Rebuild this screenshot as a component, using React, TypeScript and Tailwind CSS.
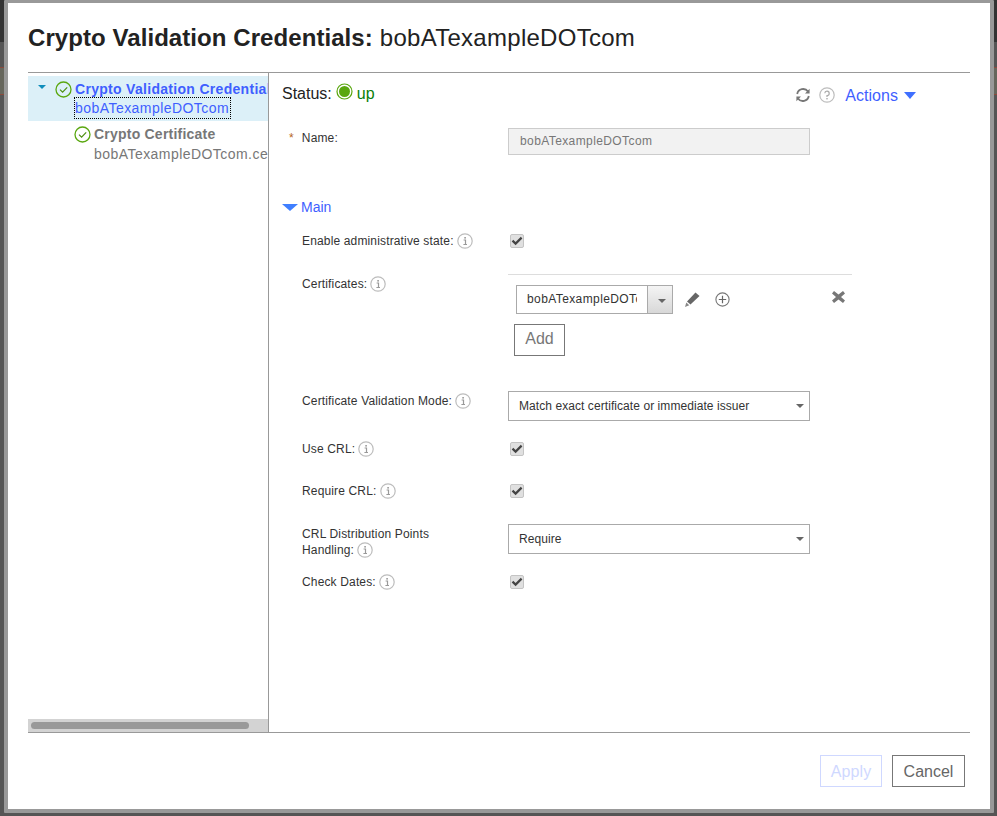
const sans = 'font-["Liberation_Sans",Arial,sans-serif]';

function CheckCircle() {
  return (
    <svg width="17" height="17" viewBox="0 0 17 17" fill="none" className="shrink-0">
      <circle cx="8.5" cy="8.5" r="7.5" stroke="#5aa70f" strokeWidth="1.3" />
      <path d="M5 8.6 L7.6 11.2 L12.2 6.4" stroke="#4d8f10" strokeWidth="1.2" />
    </svg>
  );
}

function Info() {
  return (
    <svg width="16" height="16" viewBox="0 0 16 16" fill="none" className="shrink-0">
      <circle cx="8" cy="8" r="7.2" stroke="#bdbdbd" strokeWidth="1.2" />
      <path d="M6.6 7 H8.5 V11.3 M6.4 11.5 H10" stroke="#999" strokeWidth="1.2" />
      <rect x="7.3" y="4" width="1.6" height="1.6" fill="#999" />
    </svg>
  );
}

function Check() {
  return (
    <div className="w-[14px] h-[14px] rounded-[2px] border border-[#c4c4c4] bg-[#e0e0e0] flex items-center justify-center">
      <svg width="12" height="10" viewBox="0 0 12 10" fill="none">
        <path d="M1.5 4.6 L4.6 7.6 L10.6 1.6" stroke="#444" strokeWidth="2.2" />
      </svg>
    </div>
  );
}

function Caret() {
  return <div className="w-0 h-0 border-x-[4px] border-x-transparent border-t-[4px] border-t-[#666]" />;
}

function Select({ value }: { value: string }) {
  return (
    <div className="w-[302px] h-[30px] border border-[#aaa] flex items-center justify-between pl-[10px] pr-[5px] text-[12px] tracking-[0.07px] text-[#333]">
      <span>{value}</span>
      <Caret />
    </div>
  );
}

function Label({ text }: { text: string }) {
  return (
    <span className="flex items-center gap-[3px] whitespace-nowrap">
      {text} <Info />
    </span>
  );
}

function Row({ label, height, children }: { label: React.ReactNode; height: string; children?: React.ReactNode }) {
  return (
    <div className={`flex ${height}`}>
      <div className="w-[206px] pl-[33px] text-[12px] leading-[16px] tracking-[0.15px] text-[#333]">{label}</div>
      <div>{children}</div>
    </div>
  );
}

export default function App() {
  return (
    <div className={`relative w-[997px] h-[816px] overflow-hidden bg-[#555] ${sans}`}>
      <div className="h-[42px] bg-[#333]" />
      <div className="mt-[25px] h-[28px] border-y border-[#8a4a3c] bg-[#66665c]" />

      <div className="absolute left-[4px] top-0 w-[990px] h-[813px] border-x-4 border-b-4 border-t-[3px] border-[#999] bg-white rounded-[1px]">
        <div className="h-[69px] pl-[20px] pt-[20px] text-[24px] leading-[30px] tracking-[0.28px] text-[#222]">
          <span className="font-bold tracking-[0.07px]">Crypto Validation Credentials:</span> bobATexampleDOTcom
        </div>

        <div className="ml-[20px] w-[942px] h-[661px] border-y border-[#999] flex">
          <div className="w-[240px] flex flex-col">
            <div className="flex-1 overflow-hidden pt-[3px]">
              <div className="h-[45px] bg-[#dcf0f8] flex whitespace-nowrap">
                <div className="ml-[10px] mt-[9px] w-0 h-0 border-x-[4px] border-x-transparent border-t-[4px] border-t-[#0f8dbb]" />
                <div className="ml-[9px] mt-[5px]"><CheckCircle /></div>
                <div className="ml-[3px] mt-[5px]">
                  <div className="text-[14px] leading-[17px] font-bold tracking-[0.3px] text-[#3f5fff]">Crypto Validation Credentials</div>
                  <div className="text-[14px] leading-[20px] tracking-[0.45px] text-[#3f5fff] outline-1 outline-dotted outline-black w-[155px]">bobATexampleDOTcom</div>
                </div>
              </div>
              <div className="flex whitespace-nowrap mt-[4px] ml-[46px]">
                <div className="mt-[1px]"><CheckCircle /></div>
                <div className="ml-[3px] mt-[1px]">
                  <div className="text-[14px] leading-[17px] font-bold tracking-[0.22px] text-[#777]">Crypto Certificate</div>
                  <div className="mt-[2px] text-[14px] leading-[18px] tracking-[0.45px] text-[#777]">bobATexampleDOTcom.cert</div>
                </div>
              </div>
            </div>
            <div className="h-[13px] bg-[#d3d3d3] px-[3px] pt-[3px]">
              <div className="w-[218px] h-[7px] rounded-full bg-[#999]" />
            </div>
          </div>

          <div className="flex-1 border-l border-[#999]">
            <div className="flex items-center h-[40px] pt-[2px] pl-[13px] text-[16px] text-[#222]">
              <span>Status:</span>
              <svg width="17" height="17" viewBox="0 0 17 17" className="ml-[4px] -mt-[5px]">
                <circle cx="8.5" cy="8.5" r="7.5" fill="none" stroke="#5aa70f" strokeWidth="1.2" />
                <circle cx="8.5" cy="8.5" r="5.5" fill="#5aa70f" />
              </svg>
              <span className="ml-[4px] text-[#0a800a]">up</span>
              <div className="ml-auto mr-[54px] pt-[2px] flex items-center">
                <svg width="16" height="16" viewBox="0 0 16 16" fill="none" className="mr-[8px]">
                  <path d="M2.2 7 A6 6 0 0 1 13 4.6 M13.8 9 A6 6 0 0 1 3 11.4" stroke="#777" strokeWidth="1.8" />
                  <path d="M14.6 1.8 V6.4 H10 Z M1.4 14.2 V9.6 H6 Z" fill="#777" />
                </svg>
                <svg width="16" height="16" viewBox="0 0 16 16" fill="none" className="mr-[10px]">
                  <circle cx="8" cy="8" r="7.2" stroke="#bdbdbd" strokeWidth="1.2" />
                  <path d="M5.8 6.2 A2.2 2.2 0 1 1 8 8.6 V10" stroke="#aaa" strokeWidth="1.2" />
                  <rect x="7.3" y="11" width="1.4" height="1.4" fill="#aaa" />
                </svg>
                <span className="text-[#3f5fff] pt-[1px] tracking-[0.05px]">Actions</span>
                <div className="ml-[6px] mt-[1px] w-0 h-0 border-x-[6.5px] border-x-transparent border-t-[7px] border-t-[#3f6fff]" />
              </div>
            </div>

            <div className="flex h-[79px] pt-[15px]">
              <div className="w-[239px] pl-[20px] pt-[2px] text-[12px] leading-[16px] tracking-[0.15px] text-[#333]">
                <span className="text-[#b5651d] mr-[8px]">*</span>Name:
              </div>
              <div className="w-[302px] h-[27px] border border-[#ccc] bg-[#f2f2f2] pl-[11px] text-[12px] tracking-[0.4px] leading-[24px] text-[#777]">bobATexampleDOTcom</div>
            </div>

            <div className="flex items-center h-[24px] pl-[13px] mt-[3px] text-[14px] text-[#3f5fff]">
              <div className="w-0 h-0 border-x-[8px] border-x-transparent border-t-[7px] border-t-[#3f7fff]" />
              <span className="ml-[3px]">Main</span>
            </div>

            <div className="mt-[14px]">
              <Row height="h-[43px]" label={<Label text="Enable administrative state:" />}>
                <div className="ml-[35px] mt-[1px]"><Check /></div>
              </Row>
              <Row height="h-[117px]" label={<Label text="Certificates:" />}>
                <div className="ml-[33px] -mt-[2px] w-[344px] border-t border-[#ddd] relative">
                  <div className="mt-[10px] ml-[8px] flex items-center">
                    <div className="w-[131px] h-[29px] border border-[#aaa] border-r-0 pl-[10px] pr-[10px] text-[12px] tracking-[0.4px] leading-[27px] text-[#333]">
                      <div className="overflow-hidden whitespace-nowrap">bobATexampleDOTcom</div>
                    </div>
                    <div className="w-[26px] h-[29px] border border-[#aaa] bg-gradient-to-b from-[#f4f4f4] to-[#d8d8d8] flex items-center justify-center pl-[4px] pt-[3px]"><Caret /></div>
                    <svg width="17" height="17" viewBox="0 0 17 17" className="ml-[11px]">
                      <path d="M11.5 1.5 L15.5 5 L6.5 13.5 L3 10.5 Z" fill="#666" />
                      <path d="M2.3 11.5 L5.3 14.3 L1 16 Z" fill="#888" />
                    </svg>
                    <svg width="15" height="15" viewBox="0 0 15 15" fill="none" className="ml-[14px]">
                      <circle cx="7.5" cy="7.5" r="6.6" stroke="#777" strokeWidth="1.1" />
                      <path d="M7.5 3.8 V11.2 M3.8 7.5 H11.2" stroke="#666" strokeWidth="1.2" />
                    </svg>
                  </div>
                  <svg width="15" height="14" viewBox="0 0 15 14" className="absolute right-[6px] top-[15px]">
                    <path d="M3 1 L7.5 4.5 L12 1 L14 3.5 L10 7 L14 10.5 L12 13 L7.5 9.5 L3 13 L1 10.5 L5 7 L1 3.5 Z" fill="#777" />
                  </svg>
                  <div className="mt-[10px] ml-[6px] w-[51px] h-[32px] border border-[#777] text-center text-[16px] leading-[28px] text-[#777]">Add</div>
                </div>
              </Row>
              <Row height="h-[48px]" label={<Label text="Certificate Validation Mode:" />}>
                <div className="ml-[33px] -mt-[2px]"><Select value="Match exact certificate or immediate issuer" /></div>
              </Row>
              <Row height="h-[42px]" label={<Label text="Use CRL:" />}>
                <div className="ml-[35px] mt-[1px]"><Check /></div>
              </Row>
              <Row height="h-[41px]" label={<Label text="Require CRL:" />}>
                <div className="ml-[35px] mt-[1px]"><Check /></div>
              </Row>
              <Row
                height="h-[50px]"
                label={
                  <div className="pt-[3px] leading-[15px]">
                    CRL Distribution Points
                    <Label text="Handling:" />
                  </div>
                }
              >
                <div className="ml-[33px]"><Select value="Require" /></div>
              </Row>
              <Row height="h-[30px]" label={<Label text="Check Dates:" />}>
                <div className="ml-[35px] mt-[1px]"><Check /></div>
              </Row>
            </div>
          </div>
        </div>

        <div className="flex justify-end gap-[10px] pr-[25px] pt-[22px] text-[16px]">
          <div className="w-[62px] h-[32px] border border-[#cfd8ff] text-center leading-[32px] tracking-[0.1px] text-[#cfd8ff]">Apply</div>
          <div className="w-[73px] h-[32px] border border-[#777] text-center leading-[32px] text-[#666]">Cancel</div>
        </div>
      </div>
    </div>
  );
}
